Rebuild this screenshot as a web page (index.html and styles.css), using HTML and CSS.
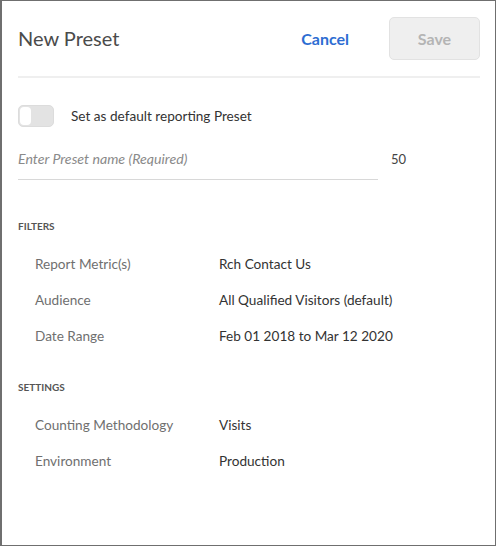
FILE: index.html
```html
<!DOCTYPE html>
<html>
<head>
<meta charset="utf-8">
<link rel="stylesheet" href="styles.css">
</head>
<body>
<div class="dialog">
  <header class="head">
    <h1 class="title">New Preset</h1>
    <div class="actions">
      <button class="cancel">Cancel</button>
      <button class="save" disabled>Save</button>
    </div>
  </header>
  <div class="divider"></div>
  <div class="toggle-row">
    <span class="toggle"><span class="knob"></span></span>
    <span class="toggle-label">Set as default reporting Preset</span>
  </div>
  <div class="name-row">
    <div class="field">Enter Preset name (Required)</div>
    <span class="count">50</span>
  </div>
  <section class="section">
    <h2 class="sec-title">FILTERS</h2>
    <div class="row"><span class="label">Report Metric(s)</span><span class="value">Rch Contact Us</span></div>
    <div class="row"><span class="label">Audience</span><span class="value">All Qualified Visitors (default)</span></div>
    <div class="row"><span class="label">Date Range</span><span class="value">Feb 01 2018 to Mar 12 2020</span></div>
  </section>
  <section class="section">
    <h2 class="sec-title">SETTINGS</h2>
    <div class="row"><span class="label">Counting Methodology</span><span class="value">Visits</span></div>
    <div class="row"><span class="label">Environment</span><span class="value">Production</span></div>
  </section>
</div>
</body>
</html>
```
FILE: styles.css
```css
* { box-sizing: border-box; }
html, body { margin: 0; padding: 0; background: #fff; }
body { font-family: "Lato", "Open Sans", sans-serif; }
.dialog {
  width: 496px;
  height: 546px;
  border: 1px solid #6f6f6f;
  border-left-width: 2px;
  padding: 0 15px 0 16px;
  overflow: hidden;
}
.head {
  display: flex;
  align-items: center;
  justify-content: space-between;
  height: 75px;
  padding-bottom: 1px;
}
.title {
  margin: 0;
  font-size: 20px;
  font-weight: 400;
  color: #4b4b4b;
}
.actions { display: flex; align-items: center; gap: 40px; }
.cancel {
  border: 0; background: none; padding: 0;
  font-family: inherit; font-size: 16px; font-weight: 700;
  color: #2d6dd2;
}
.save {
  width: 91px; height: 43px;
  border: 1px solid #e2e2e2; border-radius: 5px;
  background: #efefef;
  font-family: inherit; font-size: 16px; font-weight: 700;
  color: #b4b4b4;
}
.divider { height: 2px; background: #efefef; }
.toggle-row {
  display: flex; align-items: center; gap: 17px;
  margin-top: 27px; height: 22px;
}
.toggle {
  width: 36px; height: 22px;
  border: 1px solid #dcdcdc; border-radius: 5px;
  background: #e3e3e3;
  display: flex; padding: 1px;
}
.knob { width: 11px; height: 18px; background: #fff; border-radius: 4px; }
.toggle-label { font-size: 13.6px; color: #333; }
.name-row {
  display: flex; align-items: center; gap: 13px;
  margin-top: 12px;
}
.field {
  width: 360px; height: 41px;
  border-bottom: 1px solid #d8d8d8;
  display: flex; align-items: center;
  font-size: 14.2px; font-style: italic; color: #8a8a8a;
  padding-bottom: 2px;
}
.count { font-size: 13px; color: #444; padding-bottom: 2px; }
.section { margin-top: 40px; }
.section + .section { margin-top: 27px; }
.sec-title {
  margin: 0 0 14px;
  font-size: 10px; font-weight: 700; color: #555;
}
.row {
  display: flex; align-items: center; height: 36px;
  padding-left: 17px; font-size: 13.6px;
}
.label { width: 184px; color: #6f6f6f; }
.value { color: #333; }
```
